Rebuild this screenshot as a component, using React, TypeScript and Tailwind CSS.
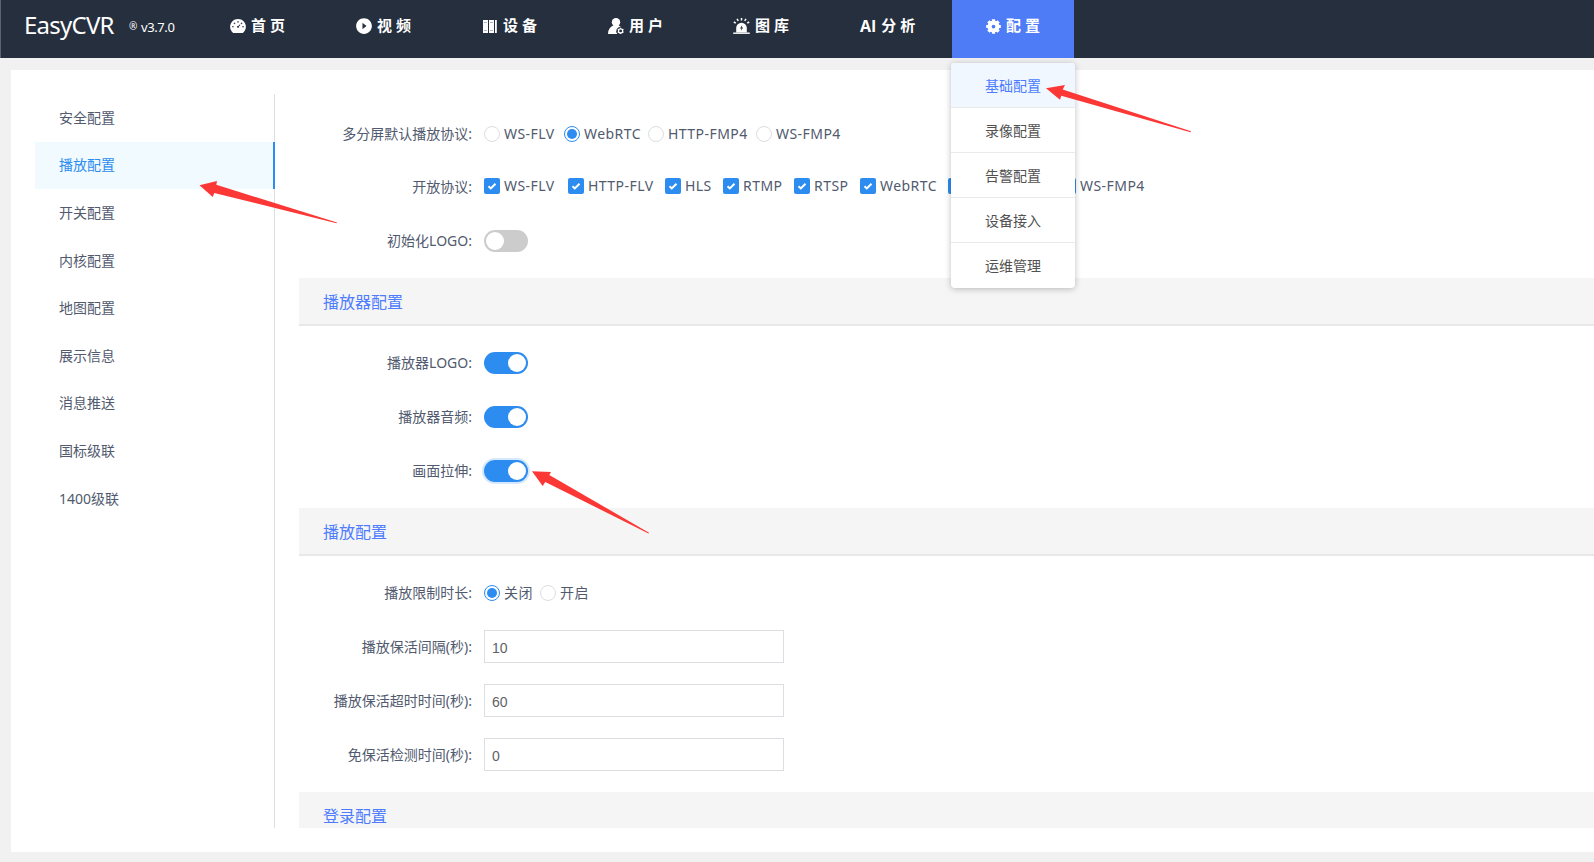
import { type ReactNode } from "react";
import { AiFillDashboard, AiFillPlayCircle } from "react-icons/ai";

type NavItem = { label: string; icon?: ReactNode; pad: string; active?: boolean };
type Option = { label: string; width: string; checked?: boolean };

function DeviceIcon() {
  return (
    <svg className="mr-[6px] h-[15px] w-[14px]" viewBox="0 0 14 15" fill="none">
      <path d="M0 1h5v13H0zM6 1h5v13H6z" fill="#fff" />
      <path d="M12 1h1.8v13H12z" fill="#fff" />
      <path d="M1 3.5h3M7 3.5h3M1 11.5h3M7 11.5h3" stroke="#9aa0ac" strokeWidth="0.8" />
    </svg>
  );
}

function UserIcon() {
  return (
    <svg className="mr-[5px] h-4 w-4" viewBox="0 0 16 16" fill="none">
      <circle cx="8" cy="4.2" r="4.2" fill="#fff" />
      <path d="M5.3 7.4C2 8.8 0 11.5 0 16h9.3a4.4 4.4 0 0 1 3.5-7.3C12 8.1 11.3 7.7 10.7 7.4z" fill="#fff" />
      <circle cx="12.6" cy="12.9" r="2.1" stroke="#fff" strokeWidth="1.3" />
      <path d="M12.6 9.7v1M12.6 15v1M9.8 11.3l.9.5M14.5 14l.9.5M9.8 14.5l.9-.5M14.5 11.8l.9-.5" stroke="#fff" strokeWidth="1.1" />
    </svg>
  );
}

function AlarmIcon() {
  return (
    <svg className="mr-[5px] h-4 w-[17px]" viewBox="0 0 17 16" fill="none">
      <path d="M3.2 14.5V10a5.3 5.3 0 0 1 10.6 0v4.5z" fill="#fff" />
      <path d="M.2 15.2h16.6" stroke="#fff" strokeWidth="1.4" />
      <path d="M8.5 0v2.6M4 .8l1.3 2M13 .8l-1.3 2M.8 4l2 1.2M16.2 4l-2 1.2" stroke="#fff" strokeWidth="1.5" />
      <path d="M9.2 7L7 10.4h1.4l-.4 2.4 2.2-3.4H8.8z" fill="#262f3e" />
    </svg>
  );
}

function GearIcon() {
  return (
    <svg className="mr-[5px] h-[15px] w-[15px]" viewBox="0 0 16 16" fill="none">
      <circle cx="8" cy="8" r="4.2" stroke="#fff" strokeWidth="4.4" />
      <path d="M8 .2v3M8 12.800v3M.2 8h3M12.800 8h3M2.500 2.500l2 2M11.500 11.500l2 2M2.500 13.500l2-2M11.500 4.500l2-2" stroke="#fff" strokeWidth="3.400" />
    </svg>
  );
}

const NAV: NavItem[] = [
  { label: "首页", icon: <AiFillDashboard size={18} className="mr-1" />, pad: "pl-[33px]" },
  { label: "视频", icon: <AiFillPlayCircle size={18} className="mr-1" />, pad: "pl-[33px]" },
  { label: "设备", icon: <DeviceIcon />, pad: "pl-[35px]" },
  { label: "用户", icon: <UserIcon />, pad: "pl-[34px]" },
  { label: "图库", icon: <AlarmIcon />, pad: "pl-[33px]" },
  { label: "分析", icon: <span className="mr-[5px] font-['Open_Sans',sans-serif] text-base tracking-normal">AI</span>, pad: "pl-[34px]" },
  { label: "配置", icon: <GearIcon />, pad: "pl-[34px]", active: true },
];

const DROPDOWN = ["基础配置", "录像配置", "告警配置", "设备接入", "运维管理"];

const SIDE_MENU = ["安全配置", "播放配置", "开关配置", "内核配置", "地图配置", "展示信息", "消息推送", "国标级联", "1400级联"];

const DEFAULT_PROTOCOLS: Option[] = [
  { label: "WS-FLV", width: "w-20" },
  { label: "WebRTC", width: "w-[84px]", checked: true },
  { label: "HTTP-FMP4", width: "w-[108px]" },
  { label: "WS-FMP4", width: "w-[90px]" },
];

// the nameless entry sits under the open dropdown
const OPEN_PROTOCOLS: Option[] = [
  { label: "WS-FLV", width: "w-[84px]" },
  { label: "HTTP-FLV", width: "w-[97px]" },
  { label: "HLS", width: "w-[58px]" },
  { label: "RTMP", width: "w-[71px]" },
  { label: "RTSP", width: "w-[66px]" },
  { label: "WebRTC", width: "w-[88px]" },
  { label: "", width: "w-28" },
  { label: "WS-FMP4", width: "w-24" },
];

const LIMIT_OPTIONS: Option[] = [
  { label: "关闭", width: "w-14", checked: true },
  { label: "开启", width: "w-14" },
];

function Row({ label, height = "h-[54px]", children }: { label: string; height?: string; children: ReactNode }) {
  return (
    <div className={`flex items-center ${height}`}>
      <div className="w-[173px] shrink-0 text-right">{label}:</div>
      <div className="ml-3 flex items-center">{children}</div>
    </div>
  );
}

function Radio({ label, width, checked }: Option) {
  return (
    <label className={`flex shrink-0 items-center tracking-[0.45px] whitespace-nowrap ${width}`}>
      <span className={`mr-1 flex h-4 w-4 shrink-0 items-center justify-center rounded-full border bg-white ${checked ? "border-[#2d8cf0]" : "border-[#dcdee2]"}`}>
        {checked && <span className="h-[10px] w-[10px] rounded-full bg-[#2d8cf0]" />}
      </span>
      {label}
    </label>
  );
}

function Checkbox({ label, width }: Option) {
  return (
    <label className={`mb-[2px] flex shrink-0 items-center tracking-[0.45px] whitespace-nowrap ${width}`}>
      <span className="mr-1 flex h-4 w-4 shrink-0 items-center justify-center rounded-[2px] bg-[#2d8cf0]">
        <svg className="h-4 w-4" viewBox="0 0 16 16" fill="none">
          <path d="M4.5 8.2l2.3 2.2 4.7-4.7" stroke="#fff" strokeWidth="2" />
        </svg>
      </span>
      {label}
    </label>
  );
}

function Switch({ on, focused }: { on?: boolean; focused?: boolean }) {
  return (
    <span className={`flex h-[22px] w-11 items-center rounded-full px-0.5 ${on ? "justify-end bg-[#2d8cf0]" : "bg-[#ccc]"} ${focused ? "ring-2 ring-[#2d8cf0]/20" : ""}`}>
      <span className="h-[18px] w-[18px] rounded-full bg-white" />
    </span>
  );
}

function NumberInput({ value }: { value: string }) {
  return (
    <input
      defaultValue={value}
      className="h-[33px] w-[300px] border border-[#dcdee2] bg-white px-[7px] pt-0.5 font-['Liberation_Sans',sans-serif] text-sm text-[#606266] outline-none"
    />
  );
}

function SectionTitle({ children }: { children: ReactNode }) {
  return (
    <div className="flex h-[48.6px] shrink-0 items-center border-b-2 border-[#e8e8e8] bg-[#f5f5f5] pt-[2px] pl-6 text-base text-[#4d7cfe]">
      {children}
    </div>
  );
}

export default function App() {
  return (
    <div className="relative flex h-[862px] w-[1594px] flex-col overflow-hidden bg-[#f1f1f1] font-['Noto_Sans','Noto_Sans_CJK_SC',sans-serif] text-sm text-[#515a6e]">
      <header className="flex h-[58px] shrink-0 border-l border-[#5b6270] bg-[#262f3e] text-white">
        <div className="flex w-[195px] shrink-0 items-start pl-[23px]">
          <span className="w-[105px] pt-[9px] text-2xl tracking-[-0.75px]">EasyCVR</span>
          <span className="w-3 pt-[20px] text-[10px] leading-3">®</span>
          <span className="pt-[18px] text-[13px] tracking-[-0.4px]">v3.7.0</span>
        </div>
        <nav className="flex">
          {NAV.map((item) => (
            <div key={item.label} className={`relative mr-1 w-[122px] ${item.active ? "bg-[#4d7cf6]" : ""}`}>
              <div className={`flex h-[52px] items-center text-[15px] font-bold tracking-[4px] whitespace-nowrap ${item.pad}`}>
                {item.icon}
                {item.label}
              </div>
              {item.active && (
                <ul className="absolute top-[63px] -left-px z-10 w-[124px] overflow-hidden rounded bg-white text-center text-[#515151] shadow-[0_1px_6px_rgba(0,0,0,0.25)]">
                  {DROPDOWN.map((d, i) => (
                    <li key={d} className={`h-[45px] border-b border-[#e8eaec] leading-[45px] last:border-0 ${i === 0 ? "bg-[#f0f7ff] text-[#4d7cfe]" : ""}`}>
                      {d}
                    </li>
                  ))}
                </ul>
              )}
            </div>
          ))}
        </nav>
      </header>

      <main className="mt-3 ml-[11px] flex h-[782px] bg-white py-6 pl-6">
        <ul className="h-full w-60 shrink-0 border-r border-[#dcdee2]">
          {SIDE_MENU.map((m) => (
            <li
              key={m}
              className={`flex h-[47.6px] items-center pl-6 ${m === "播放配置" ? "-mr-px border-r-2 border-[#2d8cf0] bg-[#f0faff] text-[#2d8cf0]" : ""}`}
            >
              {m}
            </li>
          ))}
        </ul>

        <div className="ml-6 flex-1 overflow-hidden">
          <div className="pt-[13px] pb-[9.5px]">
            <Row label="多分屏默认播放协议" height="h-[53px]">
              {DEFAULT_PROTOCOLS.map((o) => <Radio key={o.label} {...o} />)}
            </Row>
            <Row label="开放协议" height="h-[53px]">
              {OPEN_PROTOCOLS.map((o) => <Checkbox key={o.label} {...o} />)}
            </Row>
            <Row label="初始化LOGO" height="h-[55px]"><Switch /></Row>
          </div>

          <SectionTitle>播放器配置</SectionTitle>
          <div className="py-[9.8px]">
            <Row label="播放器LOGO"><Switch on /></Row>
            <Row label="播放器音频"><Switch on /></Row>
            <Row label="画面拉伸"><Switch on focused /></Row>
          </div>

          <SectionTitle>播放配置</SectionTitle>
          <div className="pt-[9.6px] pb-[9.8px]">
            <Row label="播放限制时长">
              {LIMIT_OPTIONS.map((o) => <Radio key={o.label} {...o} />)}
            </Row>
            <Row label="播放保活间隔(秒)"><NumberInput value="10" /></Row>
            <Row label="播放保活超时时间(秒)"><NumberInput value="60" /></Row>
            <Row label="免保活检测时间(秒)"><NumberInput value="0" /></Row>
          </div>

          <SectionTitle>登录配置</SectionTitle>
        </div>
      </main>

      {/* callout arrows drawn over the page */}
      <svg className="pointer-events-none absolute inset-0 z-20 h-[862px] w-[1594px]" viewBox="0 0 1594 862" fill="#fb3836">
        <path d="M1046 88.3L1065 85L1062.7 89.5L1191 131.3L1190.5 132.2L1061.3 95.7L1060 99.7Z" />
        <path d="M199.5 185.3L217 181L216.3 184.7L337 222.5L336.5 223.3L214.3 193L212.7 197Z" />
        <path d="M532 471.3L551 472L549.3 475L649 532.7L648.5 533.5L545.3 482L542.7 486Z" />
      </svg>
    </div>
  );
}
